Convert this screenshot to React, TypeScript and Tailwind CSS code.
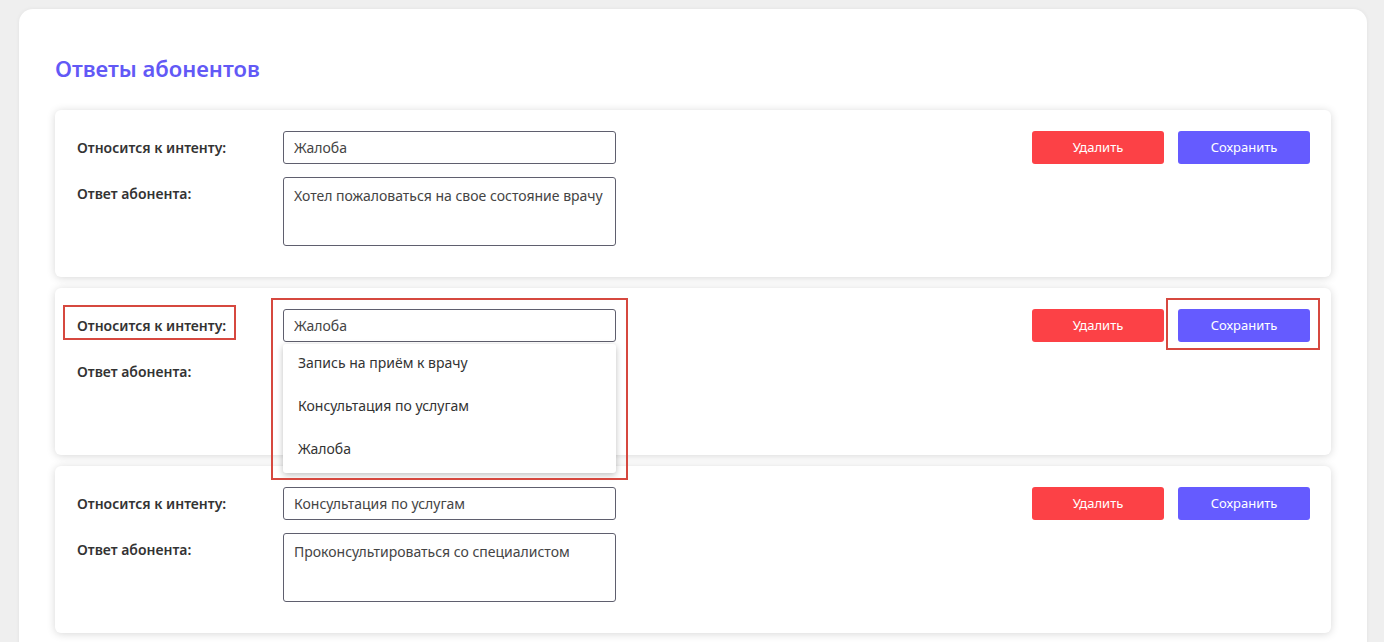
import { useState } from 'react'

type Row = { intent: string; answer: string }

const rows: Row[] = [
  { intent: 'Жалоба', answer: 'Хотел пожаловаться на свое состояние врачу' },
  { intent: 'Жалоба', answer: '' },
  { intent: 'Консультация по услугам', answer: 'Проконсультироваться со специалистом' },
]

const options = ['Запись на приём к врачу', 'Консультация по услугам', 'Жалоба']

function AnswerCard({ row, open }: { row: Row; open?: boolean }) {
  const [intent, setIntent] = useState(row.intent)
  const [answer, setAnswer] = useState(row.answer)

  return (
    <div className={`relative flex justify-between rounded-md bg-white pt-[21px] pr-[21px] pb-[31px] pl-[22px] shadow-[0_1px_8px_rgba(0,0,0,0.16)] ${open ? 'z-10' : ''}`}>
      <div className="grid grid-cols-[206px_333px] gap-y-[13px]">
        <label className="pt-[6px] text-[14px] font-semibold text-[#333]">Относится к интенту:</label>
        <div className="relative">
          <input
            value={intent}
            onChange={(e) => setIntent(e.target.value)}
            className="h-[33px] w-full rounded-[3px] border border-[#5f5f6e] px-[10px] text-[14px] text-[#444] outline-none"
          />
          {open && (
            <div className="absolute top-[35px] left-0 z-20 w-full rounded-[3px] bg-white shadow-[0_2px_6px_rgba(0,0,0,0.25)]">
              {options.map((o) => (
                <div key={o} className="flex h-[43px] items-start px-[15px] pt-[8px] text-[14px] text-[#333]">
                  {o}
                </div>
              ))}
            </div>
          )}
        </div>
        <label className="pt-[6px] text-[14px] font-semibold text-[#333]">Ответ абонента:</label>
        <textarea
          value={answer}
          onChange={(e) => setAnswer(e.target.value)}
          className="h-[69px] w-full resize-none rounded-[3px] border border-[#5f5f6e] px-[10px] py-[7px] text-[14px] text-[#444] outline-none"
        />
      </div>

      <div className="flex gap-[14px]">
        <button className="h-[33px] w-[132px] rounded-[3px] bg-[#fc4146] text-[13px] text-white">Удалить</button>
        <button className="h-[33px] w-[132px] rounded-[3px] bg-[#655bff] text-[13px] text-white">Сохранить</button>
      </div>

      {open && (
        <>
          <div className="pointer-events-none absolute top-[17px] left-[8px] h-[35px] w-[173px] border-2 border-[#d6483f]"></div>
          <div className="pointer-events-none absolute top-[10px] left-[216px] z-30 h-[182px] w-[357px] border-2 border-[#d6483f]"></div>
          <div className="pointer-events-none absolute top-[10px] left-[1111px] h-[52px] w-[154px] border-2 border-[#d6483f]"></div>
        </>
      )}
    </div>
  )
}

export default function App() {
  return (
    <div className="min-h-screen bg-[#efefef] pt-[9px] pr-[17px] pl-[19px] font-['Noto_Sans',sans-serif]">
      <div className="rounded-[14px] bg-white px-9 pt-[44px] pb-8 shadow-[0_0_4px_rgba(0,0,0,0.06)]">
        <h1 className="mb-[27px] text-[22px] leading-[30px] font-semibold text-[#6259f6]">Ответы абонентов</h1>
        <div className="flex flex-col gap-[11px]">
          {rows.map((r, i) => (
            <AnswerCard key={i} row={r} open={i === 1} />
          ))}
        </div>
      </div>
    </div>
  )
}
